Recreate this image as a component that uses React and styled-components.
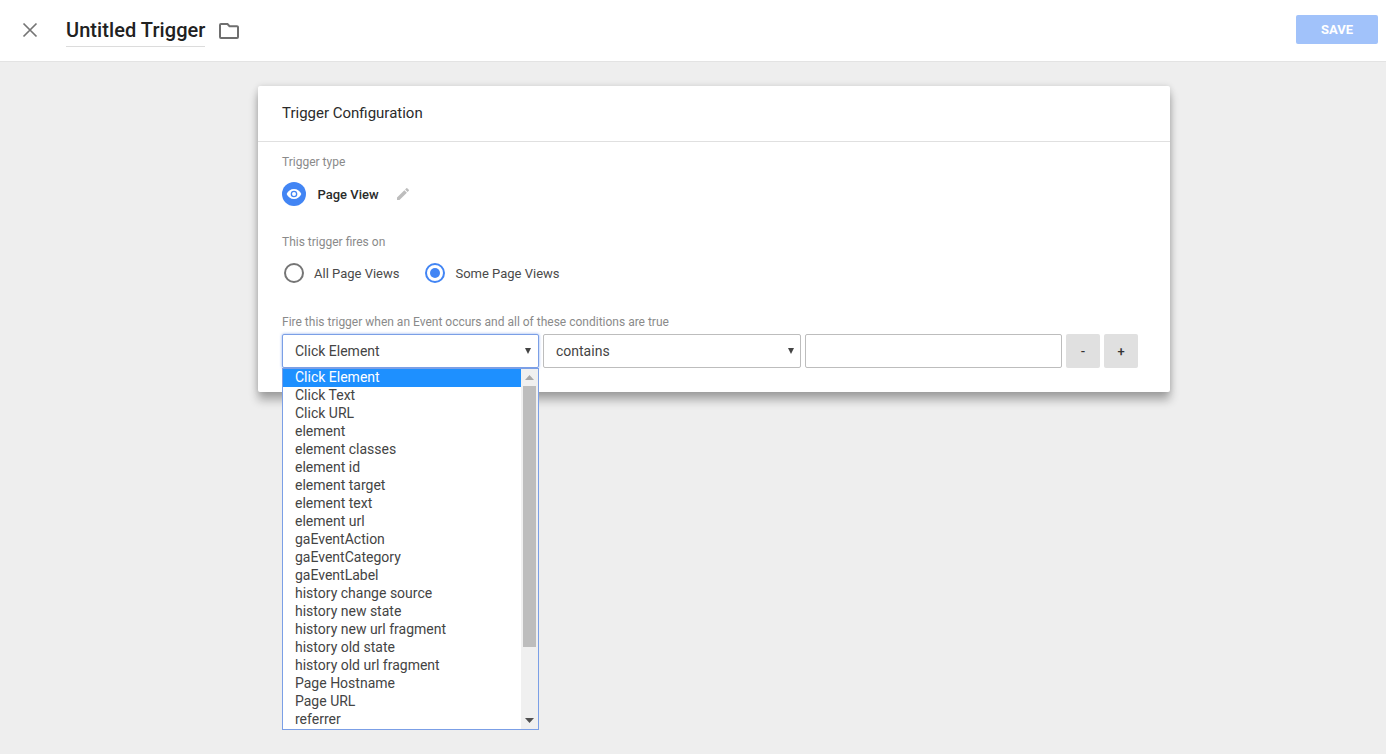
import React from 'react'
import styled, { createGlobalStyle } from 'styled-components'

const GlobalStyle = createGlobalStyle`
  html, body {
    margin: 0;
    height: 100%;
    background: #eeeeee;
    font-family: Roboto, "Liberation Sans", sans-serif;
    overflow: hidden;
  }
  * { box-sizing: border-box; }
`

const Page = styled.div`
  width: 1386px;
  height: 754px;
  background: #eeeeee;
`

const TopBar = styled.header`
  display: flex;
  align-items: center;
  height: 62px;
  padding: 0 8px 3px 21px;
  background: #fff;
  border-bottom: 1px solid #e3e3e3;
`

const IconButton = styled.button`
  display: flex;
  padding: 0;
  border: 0;
  background: none;
`

const CloseButton = styled(IconButton)`
  margin-top: 1px;
`

const TitleText = styled.h1`
  margin: 0 0 0 27px;
  padding: 3px 0 0;
  height: 35px;
  font-size: 20px;
  line-height: 30px;
  font-weight: 500;
  letter-spacing: 0.07px;
  color: #212121;
  border-bottom: 1px solid #dcdcdc;
`

const FolderButton = styled(IconButton)`
  margin: 4px 0 0 14px;
`

const SaveButton = styled.button`
  margin-left: auto;
  width: 82px;
  height: 29px;
  border: 0;
  border-radius: 2px;
  background: #a1c2fa;
  color: #fff;
  font-family: inherit;
  font-size: 13px;
  font-weight: 700;
`

const Content = styled.main`
  padding: 24px 216px 0 258px;
`

const Card = styled.section`
  height: 306px;
  background: #fff;
  border-radius: 2px;
  box-shadow: 0 8px 10px rgba(0, 0, 0, 0.3), 0 0 6px rgba(0, 0, 0, 0.12);
`

const CardTitle = styled.h2`
  margin: 0;
  height: 56px;
  padding: 18px 24px 0;
  font-size: 15px;
  line-height: 18px;
  font-weight: 400;
  color: #2b2b2b;
  border-bottom: 1px solid #e0e0e0;
`

const CardBody = styled.div`
  padding: 13px 24px 0;
`

const Label = styled.div`
  font-size: 12px;
  line-height: 14px;
  color: #8a8a8a;
`

const TypeRow = styled.div`
  display: flex;
  align-items: center;
  height: 24px;
  margin-top: 13px;
`

const TypeBadge = styled.span`
  display: flex;
  align-items: center;
  justify-content: center;
  width: 24px;
  height: 24px;
  border-radius: 50%;
  background: #4285f4;
`

const TypeName = styled.span`
  margin-left: 11.5px;
  font-size: 13px;
  font-weight: 500;
  color: #2b2b2b;
`

const EditIcon = styled.svg`
  margin-left: 16px;
`

const FiresLabel = styled(Label)`
  margin-top: 29px;
`

const RadioRow = styled.div`
  display: flex;
  align-items: center;
  gap: 26px;
  height: 24px;
  margin-top: 12px;
  padding-left: 2px;
`

const RadioOption = styled.label`
  display: flex;
  align-items: center;
  gap: 10px;
  font-size: 13px;
  color: #4a4a4a;
`

const RadioCircle = styled.span`
  display: flex;
  align-items: center;
  justify-content: center;
  width: 20px;
  height: 20px;
  border-radius: 50%;
  border: 2px solid ${p => (p.$checked ? '#4285f4' : '#757575')};
  &::after {
    content: '';
    display: ${p => (p.$checked ? 'block' : 'none')};
    width: 10px;
    height: 10px;
    border-radius: 50%;
    background: #4285f4;
  }
`

const ConditionLabel = styled(Label)`
  margin-top: 30px;
`

const ConditionRow = styled.div`
  position: relative;
  display: flex;
  gap: 4px;
  margin-top: 5px;
`

const SelectBox = styled.div`
  display: flex;
  align-items: center;
  justify-content: space-between;
  width: ${p => p.$width}px;
  height: 34px;
  padding: 0 ${p => p.$right}px 0 12px;
  background: #fff;
  border: 1px solid ${p => (p.$open ? '#7b9fe6' : '#bdbdbd')};
  border-radius: 2px;
  box-shadow: ${p => (p.$open ? '0 0 3px rgba(91, 137, 230, 0.7)' : 'none')};
  font-size: 14px;
  color: #444;
`

const Caret = styled.span`
  width: 0;
  height: 0;
  border-left: 3.5px solid transparent;
  border-right: 3.5px solid transparent;
  border-top: 6px solid #444;
`

const TextBox = styled.div`
  width: 257px;
  height: 34px;
  background: #fff;
  border: 1px solid #bdbdbd;
  border-radius: 2px;
`

const RowButton = styled.button`
  width: 34px;
  height: 34px;
  padding: 0;
  border: 0;
  border-radius: 2px;
  background: #e0e0e0;
  color: #333;
  font-family: inherit;
  font-size: 13px;
  font-weight: 500;
`

const Dropdown = styled.div`
  position: absolute;
  top: 34px;
  left: 0;
  z-index: 2;
  display: flex;
  width: 257px;
  height: 362px;
  background: #fff;
  border: 1px solid #7b9fe6;
  overflow: hidden;
`

const OptionList = styled.ul`
  flex: 1;
  min-width: 0;
  margin: 0;
  padding: 0;
  list-style: none;
`

const OptionItem = styled.li`
  height: 18px;
  padding-left: 12px;
  font-size: 14px;
  line-height: 16px;
  color: ${p => (p.$selected ? '#fff' : '#444')};
  background: ${p => (p.$selected ? '#1e90ff' : 'transparent')};
`

const ScrollTrack = styled.div`
  display: flex;
  flex-direction: column;
  align-items: center;
  width: 17px;
  background: #f0f0f0;
`

const ScrollArrow = styled.div`
  display: flex;
  align-items: center;
  justify-content: center;
  width: 100%;
  height: 17px;
`

const ScrollThumb = styled.div`
  width: 13px;
  height: 261px;
  margin-bottom: auto;
  background: #bdbdbd;
`

const options = [
  'Click Element', 'Click Text', 'Click URL', 'element', 'element classes', 'element id',
  'element target', 'element text', 'element url', 'gaEventAction', 'gaEventCategory',
  'gaEventLabel', 'history change source', 'history new state', 'history new url fragment',
  'history old state', 'history old url fragment', 'Page Hostname', 'Page URL', 'referrer',
]

const App = () => (
  <Page>
    <GlobalStyle />
    <TopBar>
      <CloseButton aria-label="Close">
        <svg width="18" height="18" viewBox="0 0 18 18" fill="none" stroke="#757575" strokeWidth="1.7">
          <path d="M2.5 2.5l13 13M15.5 2.5l-13 13" />
        </svg>
      </CloseButton>
      <TitleText>Untitled Trigger</TitleText>
      <FolderButton aria-label="Folder">
        <svg width="20" height="16" viewBox="0 0 20 16" fill="none" stroke="#6f6f6f" strokeWidth="2">
          <path d="M2 1h6.5l2 2.2H18a1 1 0 0 1 1 1V14a1 1 0 0 1-1 1H2a1 1 0 0 1-1-1V2a1 1 0 0 1 1-1z" />
        </svg>
      </FolderButton>
      <SaveButton>SAVE</SaveButton>
    </TopBar>
    <Content>
      <Card>
        <CardTitle>Trigger Configuration</CardTitle>
        <CardBody>
          <Label>Trigger type</Label>
          <TypeRow>
            <TypeBadge>
              <svg width="16" height="16" viewBox="0 0 24 24" fill="#fff">
                <path d="M12 4.5C7 4.5 2.73 7.61 1 12c1.73 4.39 6 7.5 11 7.5s9.27-3.11 11-7.5c-1.73-4.39-6-7.5-11-7.5zM12 17a5 5 0 1 1 0-10 5 5 0 0 1 0 10zm0-8a3 3 0 1 0 0 6 3 3 0 0 0 0-6z" />
              </svg>
            </TypeBadge>
            <TypeName>Page View</TypeName>
            <EditIcon width="16" height="16" viewBox="0 0 24 24" fill="#bdbdbd">
              <path d="M3 17.25V21h3.75L17.81 9.94l-3.75-3.75L3 17.25zM20.71 7.04a1 1 0 0 0 0-1.41l-2.34-2.34a1 1 0 0 0-1.41 0l-1.83 1.83 3.75 3.75 1.83-1.83z" />
            </EditIcon>
          </TypeRow>
          <FiresLabel>This trigger fires on</FiresLabel>
          <RadioRow>
            <RadioOption><RadioCircle />All Page Views</RadioOption>
            <RadioOption><RadioCircle $checked />Some Page Views</RadioOption>
          </RadioRow>
          <ConditionLabel>Fire this trigger when an Event occurs and all of these conditions are true</ConditionLabel>
          <ConditionRow>
            <SelectBox $width={257} $right={7} $open>Click Element<Caret /></SelectBox>
            <SelectBox $width={258} $right={6}>contains<Caret /></SelectBox>
            <TextBox />
            <RowButton>-</RowButton>
            <RowButton>+</RowButton>
            <Dropdown>
              <OptionList>
                {options.map((o, i) => (
                  <OptionItem key={o} $selected={i === 0}>{o}</OptionItem>
                ))}
              </OptionList>
              <ScrollTrack>
                <ScrollArrow>
                  <svg width="9" height="5" viewBox="0 0 9 5" fill="#a8a8a8"><path d="M4.5 0L9 5H0z" /></svg>
                </ScrollArrow>
                <ScrollThumb />
                <ScrollArrow>
                  <svg width="9" height="5" viewBox="0 0 9 5" fill="#505050"><path d="M0 0h9L4.5 5z" /></svg>
                </ScrollArrow>
              </ScrollTrack>
            </Dropdown>
          </ConditionRow>
        </CardBody>
      </Card>
    </Content>
  </Page>
)

export default App
